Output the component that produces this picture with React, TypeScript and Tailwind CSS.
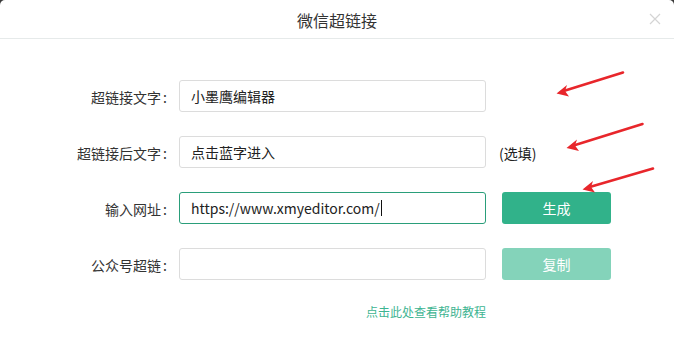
import React from "react";

const font = { fontFamily: '"Noto Sans CJK SC", "Microsoft YaHei", sans-serif' };

function Row({
  label,
  children,
  right,
}: {
  label: string;
  children: React.ReactNode;
  right?: React.ReactNode;
}) {
  return (
    <div className="flex items-center h-[32px]">
      <div className="w-[167px] text-right text-[14px] text-[#333] leading-none pt-[2px]">
        {label}
        <span className="ml-[2px]">:</span>
      </div>
      <div className="ml-[12px] w-[307px] h-[32px]">{children}</div>
      <div className="ml-[16px]">{right}</div>
    </div>
  );
}

export default function App() {
  return (
    <div className="w-[674px] h-[350px] bg-[#3a3a3a] overflow-hidden" style={font}>
      <div className="relative w-[674px] h-[350px] bg-white rounded-t-[5px]">
        <div className="h-[39px] border-b border-[#e6eaea] flex items-center justify-center relative">
          <span className="text-[16px] text-[#333] leading-none mt-[1px]">微信超链接</span>
          <svg
            className="absolute left-[649px] top-[13px]"
            width="12"
            height="12"
            viewBox="0 0 12 12"
          >
            <path d="M1 1 L11 11 M11 1 L1 11" stroke="#d4d4d4" strokeWidth="1.2" />
          </svg>
        </div>
        <div className="pt-[41px] flex flex-col gap-[24px]">
          <Row label="超链接文字">
            <div className="w-full h-full border border-[#dcdcdc] rounded-[3px] flex items-center px-[11px] text-[14px] text-[#222]">
              小墨鹰编辑器
            </div>
          </Row>
          <Row
            label="超链接后文字"
            right={<span className="text-[14px] text-[#222] -ml-[3px]">(选填)</span>}
          >
            <div className="w-full h-full border border-[#dcdcdc] rounded-[3px] flex items-center px-[11px] text-[14px] text-[#222]">
              点击蓝字进入
            </div>
          </Row>
          <Row
            label="输入网址"
            right={
              <button className="w-[109px] h-[32px] rounded-[3px] bg-[#31b28a] text-white text-[14px]">
                生成
              </button>
            }
          >
            <div className="w-full h-full border border-[#2a9e7a] rounded-[3px] flex items-center px-[11px] text-[14px] text-[#222]">
              https://www.xmyeditor.com/
              <span className="inline-block w-[1px] h-[16px] bg-[#111] ml-[1px]" />
            </div>
          </Row>
          <Row
            label="公众号超链"
            right={
              <button className="w-[109px] h-[32px] rounded-[3px] bg-[#84d3ba] text-white text-[14px]">
                复制
              </button>
            }
          >
            <div className="w-full h-full border border-[#dcdcdc] rounded-[3px]" />
          </Row>
        </div>
        <div className="mt-[24px] w-[486px] text-right text-[12px] text-[#3db491] leading-[16px]">
          点击此处查看帮助教程
        </div>
        <svg className="absolute left-0 top-0 pointer-events-none" width="674" height="350">
          <g stroke="#e8262b" strokeWidth="2.6" strokeLinecap="round" fill="#e8262b">
            <line x1="623" y1="72.5" x2="562" y2="91.5" />
            <polygon points="556.5,93.5 567,85 565,91 569,96.5" stroke="none" />
            <line x1="642.5" y1="124" x2="572" y2="146" />
            <polygon points="566.5,148 577,139.5 575,145.5 579,151" stroke="none" />
            <line x1="653" y1="168.5" x2="588" y2="187.5" />
            <polygon points="582.5,189.5 593,181 591,187 595,192.5" stroke="none" />
          </g>
        </svg>
      </div>
    </div>
  );
}
